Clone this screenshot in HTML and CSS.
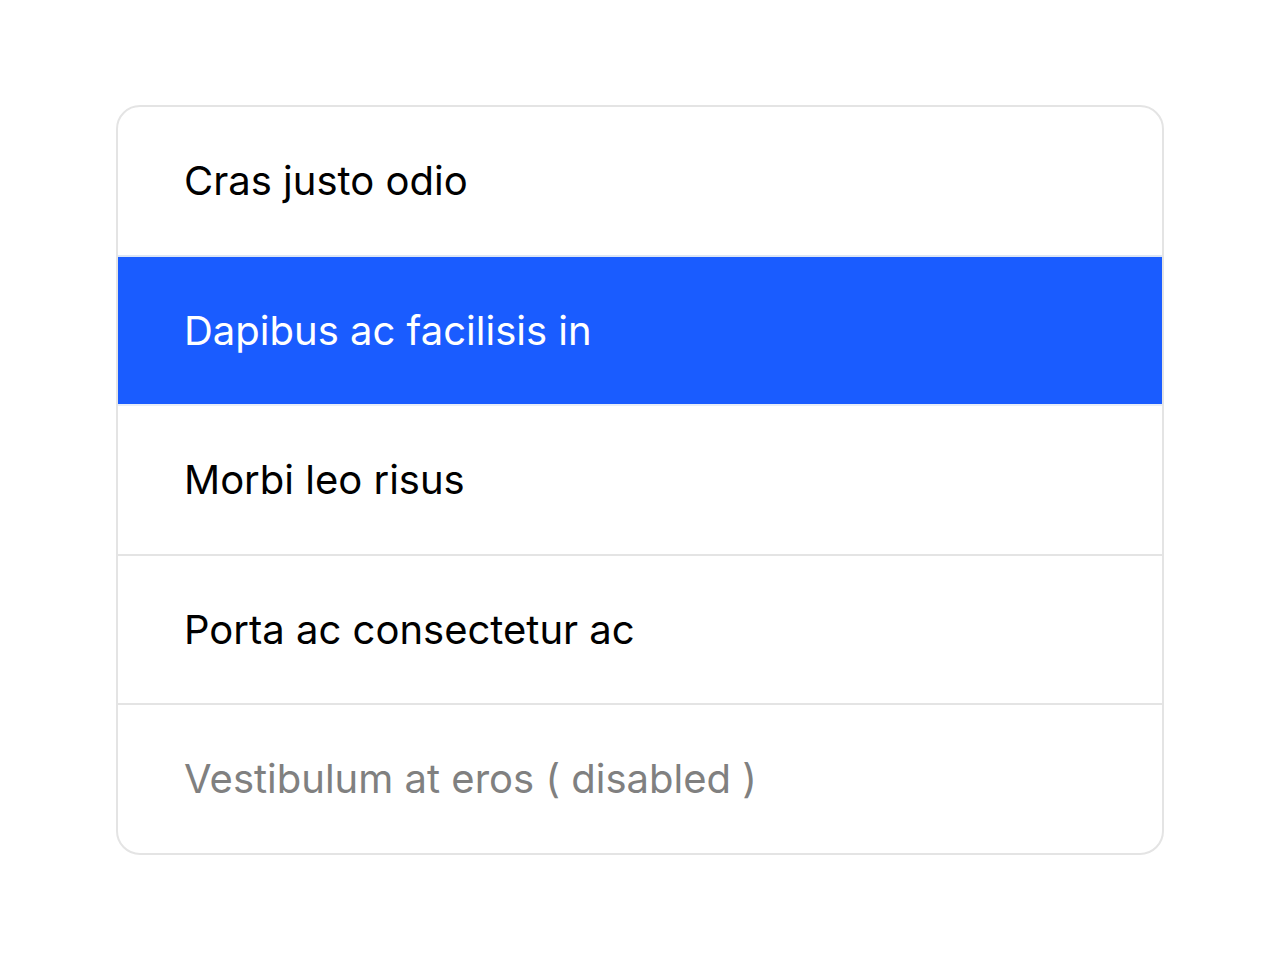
FILE: index.html
```html
<!DOCTYPE html>
<html lang="en">
<head>
  <meta charset="UTF-8">
  <title>List group</title>
  <link rel="stylesheet" href="styles.css">
</head>
<body>
<div class="page">
  <ul class="list-group">
    <li class="list-item">Cras justo odio</li>
    <li class="list-item active">Dapibus ac facilisis in</li>
    <li class="list-item">Morbi leo risus</li>
    <li class="list-item">Porta ac consectetur ac</li>
    <li class="list-item disabled">Vestibulum at eros ( disabled )</li>
  </ul>
</div>
</body>
</html>
```

FILE: styles.css
```css
body {
  margin: 0;
  background-color: white;
  font-family: Inter, Roboto, "Noto Sans", sans-serif;
  color: #000;
}

.page {
  padding: 105px 116px;
}

.list-group {
  list-style: none;
  margin: 0;
  padding: 0;
  border: 2px solid #e4e4e4;
  border-radius: 24px;
  overflow: hidden;
}

.list-item {
  padding: 44px 64px 43.6px 66px;
  font-size: 40px;
  line-height: 60px;
  border-top: 2px solid #e4e4e4;
}

.list-item:first-child {
  border-top: none;
}

.list-item.active {
  background-color: #1a5cff;
  color: white;
  border-top-color: #dce6f5;
}

.list-item.active + .list-item {
  border-top-color: #e8eef8;
}

.list-item.disabled {
  color: #808080;
}
```
